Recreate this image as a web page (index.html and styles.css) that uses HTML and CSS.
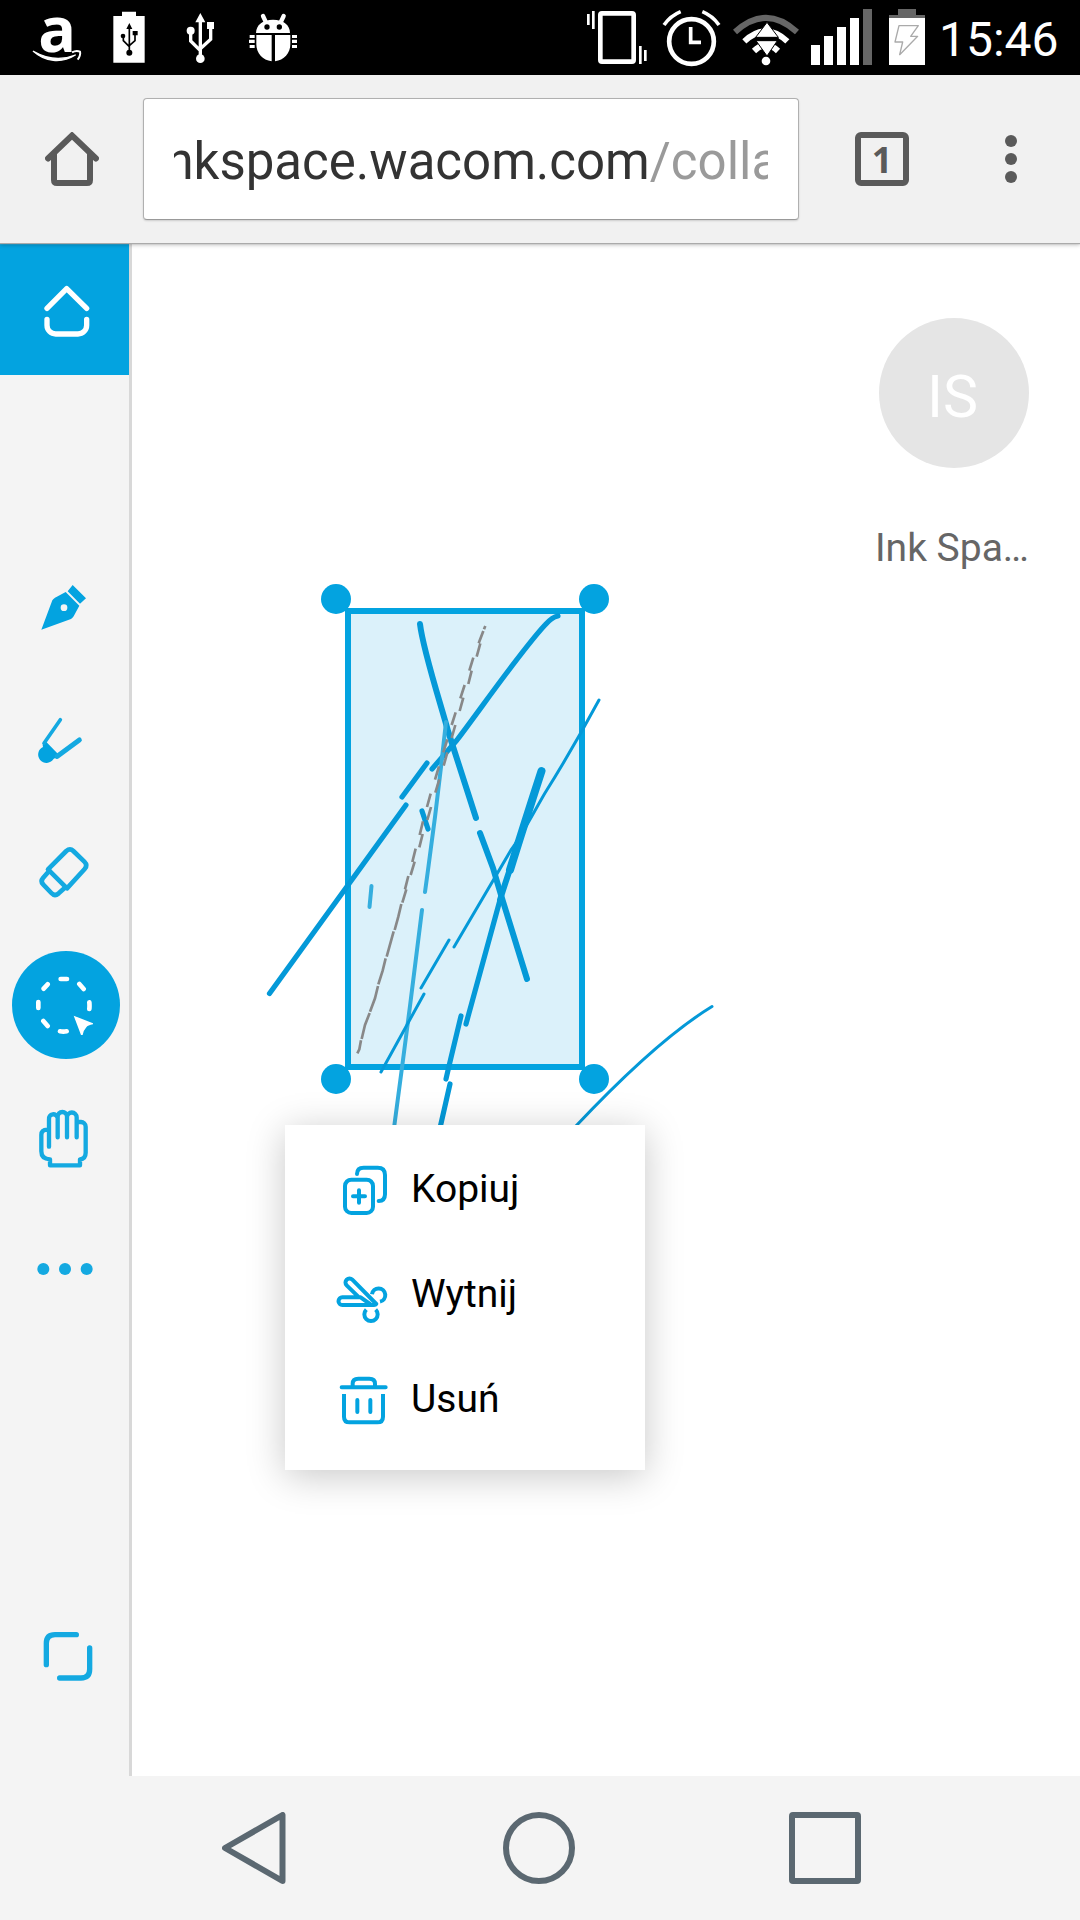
FILE: index.html
```html
<!DOCTYPE html>
<html lang="pl">
<head>
<meta charset="utf-8">
<title>Ink Space</title>
<link rel="stylesheet" href="styles.css">
</head>
<body>
<div class="screen">
  <header class="status">
    <div class="status-group">
      <svg class="amazon" viewBox="99 0 147 225"><text class="amazon-letter" x="115" y="155">a</text><path d="M100 154c34 31 84 38 126 11-42 17-84 13-126-11z" fill="#fff" stroke="#fff" stroke-width="4" stroke-linejoin="round"/><path d="M216 157c9-5 20-4 24-2 2 5-1 17-7 24" fill="none" stroke="#fff" stroke-width="6"/></svg>
      <svg class="card" viewBox="339 0 96 225"><path fill="#fff" d="M340 48h26V35h42v13h26v140h-94z"/><g fill="none" stroke="#000" stroke-width="5"><path d="M388 82v76M370 110v12l18 18M405 100v22l-17 15"/></g><path d="M388 69l9 18h-18zM398 93h15v13h-15z"/><circle cx="369" cy="108" r="7"/><circle cx="388" cy="158" r="9"/></svg>
      <svg class="usb" viewBox="558 0 87 225"><g fill="none" stroke="#fff" stroke-width="10"><path d="M601 60v116M572 92v31l29 29M632 80v38l-31 28"/></g><path fill="#fff" d="M601 39l15 28h-30zM621 66h21v21h-21z"/><circle cx="572" cy="92" r="12" fill="#fff"/><circle cx="601" cy="176" r="13" fill="#fff"/></svg>
      <svg class="bug" viewBox="747 0 147 225"><g fill="#fff"><path d="M768 99c0-24 20-40 51-40s51 16 51 40z"/><path d="M769 105h46v79c-27-3-46-25-46-51zM825 105h46v28c0 26-19 48-46 51zM749 105h15v9h-15zM747 119h17v10h-17zM749 135h15v9h-15zM876 105h15v9h-15zM876 119h15v10h-15zM876 135h15v9h-15z"/></g><path d="M789 48l9 19M851 48l-9 19" stroke="#fff" stroke-width="13" stroke-linecap="round"/><circle cx="801" cy="81" r="8"/><circle cx="838" cy="81" r="8"/></svg>
    </div>
    <div class="status-group">
      <svg class="vibrate" viewBox="78 0 186 225"><rect x="121" y="40" width="100" height="145" rx="5" fill="none" stroke="#fff" stroke-width="14"/><path fill="#fff" d="M81 42h8v33h-8zM96 33h8v54h-8zM237 138h8v54h-8zM252 150h8v33h-8z"/></svg>
      <svg class="alarm" viewBox="303 0 183 225"><circle cx="394.500" cy="124.500" r="67" fill="none" stroke="#fff" stroke-width="14"/><path d="M392 81v46h31M312 75q20-28 50-40M477 75q-20-28-50-40" fill="none" stroke="#fff" stroke-width="11"/></svg>
      <svg class="wifi" viewBox="519 0 198 225"><g fill="none"><path d="M525 96q93-85 186 0" stroke="#666" stroke-width="18"/><path d="M553 124q65-60 129 0M582 153q36-35 72 0" stroke="#fff" stroke-width="18"/></g><g fill="#fff" stroke="#000" stroke-width="3"><path d="M621 67l34 45h-68z"/><path d="M588 122h64l-31 46z"/></g><path d="M586 117h70" stroke="#000" stroke-width="9"/><circle cx="618" cy="183" r="13" fill="#fff"/></svg>
      <svg class="signal" viewBox="753 0 183 225"><path fill="#fff" d="M753 135h27v60h-27zM792 108h27v87h-27zM831 81h27v114h-27zM870 54h27v141h-27z"/><path fill="#666" d="M909 27h27v168h-27z"/></svg>
      <svg class="battery" viewBox="987 0 108 225"><path fill="#666" d="M987 45h27V27h54v18h27v9H987z"/><path fill="#fff" d="M987 54h108v141H987z"/><path d="M1017 77h58l-23 32h21l-54 55 9-38h-23z" fill="none" stroke="#aaa" stroke-width="4" stroke-linejoin="round"/></svg>
      <time class="clock">15:46</time>
    </div>
  </header>

  <div class="toolbar">
    <svg class="home" viewBox="45 132 54 54"><path d="M48 158.500L72 135.500l24 23M54 154v26q0 3 3 3h30q3 0 3-3v-26" fill="none" stroke="#5a5a5a" stroke-width="6" stroke-linecap="round"/></svg>
    <div class="address"><div class="url">inkspace.wacom.com<span class="path">/collaboration</span></div></div>
    <div class="tabs">1</div>
    <svg class="kebab" viewBox="1005 135 12 48" fill="#5a5a5a"><circle cx="1011" cy="141" r="6"/><circle cx="1011" cy="159" r="6"/><circle cx="1011" cy="177" r="6"/></svg>
  </div>

  <main class="app">
    <nav class="sidebar">
      <svg class="tool tool-home" viewBox="0 39 387 396"><path d="M141 235l59-59 60 59M141 268v18a26 26 0 0 0 26 26h67a26 26 0 0 0 26-26v-18"/></svg>
      <div class="tools">
        <svg class="tool" viewBox="0 -57 387 396"><g class="solid"><path d="M124 209l33-88q3-5 8-8l32-17 41 41-17 32q-3 5-8 8zM203 94l15-19 40 40-18 16z"/></g><circle cx="192" cy="143" r="10" fill="#f4f4f4"/></svg>
        <svg class="tool" viewBox="0 339 387 396"><path class="solid" d="M128 555l6-14 43 44-7 12q-6-5-10 1a25 25 0 1 1-31-37z"/><path class="brush" d="M181 479l-49 71"/><path class="brush-wide" d="M238 540l-66 49"/></svg>
        <svg class="tool" viewBox="0 735 387 396"><g class="eraser"><path d="M144 928l55-55q11-10 21 0l33 32q11 11 1 22l-53 58z"/><path d="M148 932l-19 22q-9 10 1 20l24 25q10 11 22 1l17-15"/></g></svg>
        <svg class="tool" viewBox="0 21 387 396"><circle class="solid" cx="198" cy="225" r="162"/><g class="lasso"><path d="M182 147h19M238 162l13 15M268 217q1 10 0 20M200 304q-10 2-20 0M143 288l-13-15M115 234v-18M131 176l12-13"/></g><path fill="#fff" d="M221 257l58 23v3q-15 2-21 10-8 8-10 22h-5z"/></svg>
        <svg class="tool" viewBox="0 417 387 396"><g class="hand"><path d="M147 650v-82a13 13 0 0 1 26-4v58M173 622v-62a14 14 0 0 1 28 0v62M201 562a14 14 0 0 1 29 0v60M231 576h11a14 14 0 0 1 15 14v78q0 18-17 20v18h-90v-18q-26-1-26-24v-49q0-16 18-16"/></g></svg>
        <svg class="tool" viewBox="0 813 387 396"><g class="dots"><circle cx="130" cy="1017" r="18"/><circle cx="195" cy="1017" r="18"/><circle cx="260" cy="1017" r="18"/></g></svg>
      </div>
      <svg class="tool" viewBox="0 -30 387 396"><path class="frame" d="M139 194v-64q0-26 26-26h64M269 144v64q0 26-26 26h-64"/></svg>
    </nav>

    <section class="canvas">
      <div class="selection"></div>
      <svg class="drawing" viewBox="132 243 948 1533">
        <g class="ink">
          <path class="w6" d="M420 624C423 650 441 705 448 731L476 818"/>
          <path class="w5" d="M558 616q-6 1-13 9C520 652 480 710 457 740L432 769"/>
          <path class="w5" d="M427 763l-25 34M406 805L269.500 993.500M422 811l6 18"/>
          <path class="w4 soft" d="M446 722l-5 45-6 50-7 53-3 22M422 910l-12 96-7 54-9 68"/>
          <path class="w4 soft" d="M371.500 886l-2 21"/>
          <path class="w6" d="M480 833l13 35 8 27 26 84"/>
          <path class="w8" d="M541.500 771Q523 828 510 870"/>
          <path class="w6" d="M511 866Q503 890 500 900"/>
          <path class="w5" d="M500 900L466 1024M461 1016l-12 50-3 13M450 1084l-10 44"/>
          <path class="w3" d="M599 700Q572 750 545 793C535 810 521 837 511 850L454 947M449 940l-28 48M424 994l-43 78"/>
          <path class="w3" d="M712 1006.500Q657 1040 575 1127"/>
        </g>
        <g class="lasso-trail" transform="translate(250 570) scale(.33333)">
          <path d="M706 168l-4 10M700 183l-14 37M691 220l-11 40M670 263l-12 39M665 302l-10 40M644 345l-13 40M640 383l-11 40M617 427l-12 38M616 465l-11 39M592 508l-12 39M592 547l-11 40M567 589l-12 40M568 628l-12 40M542 671l-11 40M543 711l-11 39M519 754l-10 41M518 792l-10 40M497 836l-10 40M494 875l-12 40M475 918l-10 40M469 958l-12 40M454 1002l-9 38-11 40M431 1084l-21 76M407 1165l-9 37-13 41M384 1248l-9 37-15 40M359 1329l-14 36-10 42M333 1411l-5 27-6 12"/>
        </g>
      </svg>
      <i class="handle top left"></i><i class="handle top right"></i>
      <i class="handle bottom left"></i><i class="handle bottom right"></i>

      <div class="user">
        <div class="avatar">IS</div>
        <div class="user-name">Ink Space</div>
      </div>

      <div class="menu">
        <div class="menu-item">
          <svg class="menu-icon" viewBox="195 81 162 315"><path d="M261 192q0-19 20-19h42q22 0 22 22v58q0 20-19 20M249 259h36M267 241v37"/><rect x="225" y="209" width="84" height="100" rx="19"/></svg>
          <span>Kopiuj</span>
        </div>
        <div class="menu-item">
          <svg class="menu-icon" viewBox="195 396 162 315"><path d="M264 559l-34-33a12 12 0 0 1 17-17l72 73q-2 3-7 3h-95a11 11 0 0 1 0-23h55l28 20"/><path stroke-linecap="butt" d="M306 553a20 20 0 1 1 24 22M289 599a20 20 0 1 0 28 0"/></svg>
          <span>Wytnij</span>
        </div>
        <div class="menu-item">
          <svg class="menu-icon" viewBox="195 711 162 315"><path d="M215 832h132M248 830v-9q0-15 17-15h33q17 0 17 15v9M262 870v36M301 870v36"/><path stroke-linecap="butt" d="M222 852v68q0 17 17 17h83q17 0 17-17v-68"/></svg>
          <span>Usuń</span>
        </div>
      </div>
    </section>
  </main>

  <footer class="navbar">
    <svg class="nav-back" viewBox="222 1812 64 72"><path d="M282.500 1815v66L225 1848z"/></svg>
    <svg class="nav-home" viewBox="503 1812 72 72"><circle cx="539" cy="1848" r="33"/></svg>
    <svg class="nav-recent" viewBox="789 1812 72 72"><rect x="792" y="1815" width="66" height="66" rx="1"/></svg>
  </footer>
</div>
</body>
</html>
```
FILE: styles.css
```css
* { box-sizing: border-box; }
body { margin: 0; font-family: Roboto, "Liberation Sans", sans-serif; }
svg { display: block; flex: none; }

.screen {
  display: flex;
  flex-direction: column;
  width: 1080px;
  height: 1920px;
  overflow: hidden;
  background: #fff;
}

/* Status bar */
.status {
  display: flex;
  justify-content: space-between;
  height: 75px;
  padding: 0 21px 0 33px;
  background: #000;
}
.status-group { display: flex; }
.status svg { height: 75px; }
.amazon { width: 49px; overflow: visible; }
.amazon-letter { font: 700 188px "Open Sans", sans-serif; fill: #fff; }
.card { width: 32px; margin-left: 31px; }
.usb { width: 29px; margin-left: 41px; }
.bug { width: 49px; margin-left: 34px; }
.vibrate { width: 62px; }
.alarm { width: 61px; margin-left: 13px; }
.wifi { width: 66px; margin-left: 11px; }
.signal { width: 61px; margin-left: 12px; }
.battery { width: 36px; margin-left: 17px; }
.clock { width: 120px; margin-left: 14px; color: #fff; font-size: 48px; line-height: 79px; }

/* Browser toolbar */
.toolbar {
  position: relative;
  z-index: 2;
  display: flex;
  align-items: center;
  height: 168px;
  padding-left: 45px;
  background: #f1f1f1;
  box-shadow: 0 1px 1px #aaa, 0 2px 4px rgba(0, 0, 0, .25);
}
.home { width: 54px; height: 54px; }
.address {
  width: 656px;
  height: 122px;
  margin-left: 44px;
  padding: 2px 30px 0 30px;
  background: #fff;
  border: 1px solid #b0b0b0;
  border-bottom-color: #999;
  border-radius: 4px;
  box-shadow: 0 1px 2px rgba(0, 0, 0, .15);
}
.url {
  overflow: hidden;
  color: #333;
  font-size: 51px;
  line-height: 122px;
  text-indent: -21px;
  white-space: nowrap;
}
.path { color: #9a9a9a; }
.tabs {
  width: 54px;
  height: 54px;
  margin-left: 56px;
  border: 6px solid #5a5a5a;
  border-radius: 6px;
  color: #5a5a5a;
  font: 700 36px/43px "Noto Sans", sans-serif;
  text-align: center;
}
.kebab { width: 12px; height: 48px; margin-left: 96px; }

/* Application */
.app { display: flex; flex: 1; min-height: 0; }
.sidebar {
  display: flex;
  flex-direction: column;
  justify-content: space-between;
  width: 132px;
  padding-bottom: 54px;
  background: #f4f4f4;
  border-right: 3px solid #d8d8d8;
}
.tools { margin-bottom: 91px; }
.tool { width: 129px; height: 132px; fill: none; stroke-linecap: round; stroke-linejoin: round; }
.tool-home { background: #03a3e0; stroke: #fff; stroke-width: 16px; }
.solid { fill: #03a3e0; }
.brush { stroke: #14a9e1; stroke-width: 11px; }
.brush-wide { stroke: #14a9e1; stroke-width: 15px; }
.eraser { stroke: #14a9e1; stroke-width: 14px; }
.lasso { stroke: #fff; stroke-width: 14px; }
.hand { stroke: #14a9e1; stroke-width: 13px; }
.dots { fill: #14a9e1; }
.frame { stroke: #14a9e1; stroke-width: 16px; }

.canvas { position: relative; flex: 1; overflow: hidden; background: #fff; }
.drawing { position: absolute; inset: 0; width: 948px; height: 1533px; fill: none; }
.ink { stroke: #0499d8; stroke-linejoin: round; }
.w3 { stroke-width: 3px; }
.w4 { stroke-width: 4px; }
.w5 { stroke-width: 5.200px; }
.w6 { stroke-width: 6px; }
.w8 { stroke-width: 8px; }
.soft { stroke: #35aede; }
.ink path { stroke-linecap: round; }
.lasso-trail { stroke: #888; stroke-width: 8px; }
.selection {
  position: absolute;
  left: 213px;
  top: 365px;
  width: 240px;
  height: 462px;
  background: #dbf1fa;
  border: 6px solid #03a3e0;
}
.handle { position: absolute; width: 30px; height: 30px; border-radius: 50%; background: #03a3e0; }
.handle.top { top: 341px; }
.handle.bottom { top: 821px; }
.handle.left { left: 189px; }
.handle.right { left: 447px; }

.user { width: 150px; margin: 75px 51px 0 auto; }
.avatar {
  height: 150px;
  padding-right: 3px;
  border-radius: 50%;
  background: #e5e5e5;
  color: #fff;
  font-size: 59px;
  line-height: 158px;
  text-align: center;
}
.user-name {
  width: 156px;
  margin: 56px 0 0 -4px;
  overflow: hidden;
  color: #666;
  font-size: 39px;
  line-height: 48px;
  text-overflow: ellipsis;
  white-space: nowrap;
}

/* Context menu */
.menu {
  position: absolute;
  left: 153px;
  top: 882px;
  width: 360px;
  height: 345px;
  padding: 12px 50px;
  background: #fff;
  box-shadow: 0 6px 36px rgba(0, 0, 0, .22);
  color: #000;
  font-size: 39px;
}
.menu-item { display: flex; align-items: center; gap: 22px; height: 105px; }
.menu-item span { padding-bottom: 1px; }
.menu-icon {
  width: 54px;
  height: 105px;
  fill: none;
  stroke: #03a3e0;
  stroke-width: 12px;
  stroke-linecap: round;
  stroke-linejoin: round;
}

/* Android navigation */
.navbar {
  display: flex;
  align-items: center;
  height: 144px;
  padding-left: 222px;
  background: #f4f4f4;
}
.navbar svg { height: 72px; fill: none; stroke: #5b6871; stroke-width: 6px; stroke-linejoin: round; }
.nav-back { width: 64px; }
.nav-home { width: 72px; margin-left: 217px; }
.nav-recent { width: 72px; margin-left: 214px; }
```
